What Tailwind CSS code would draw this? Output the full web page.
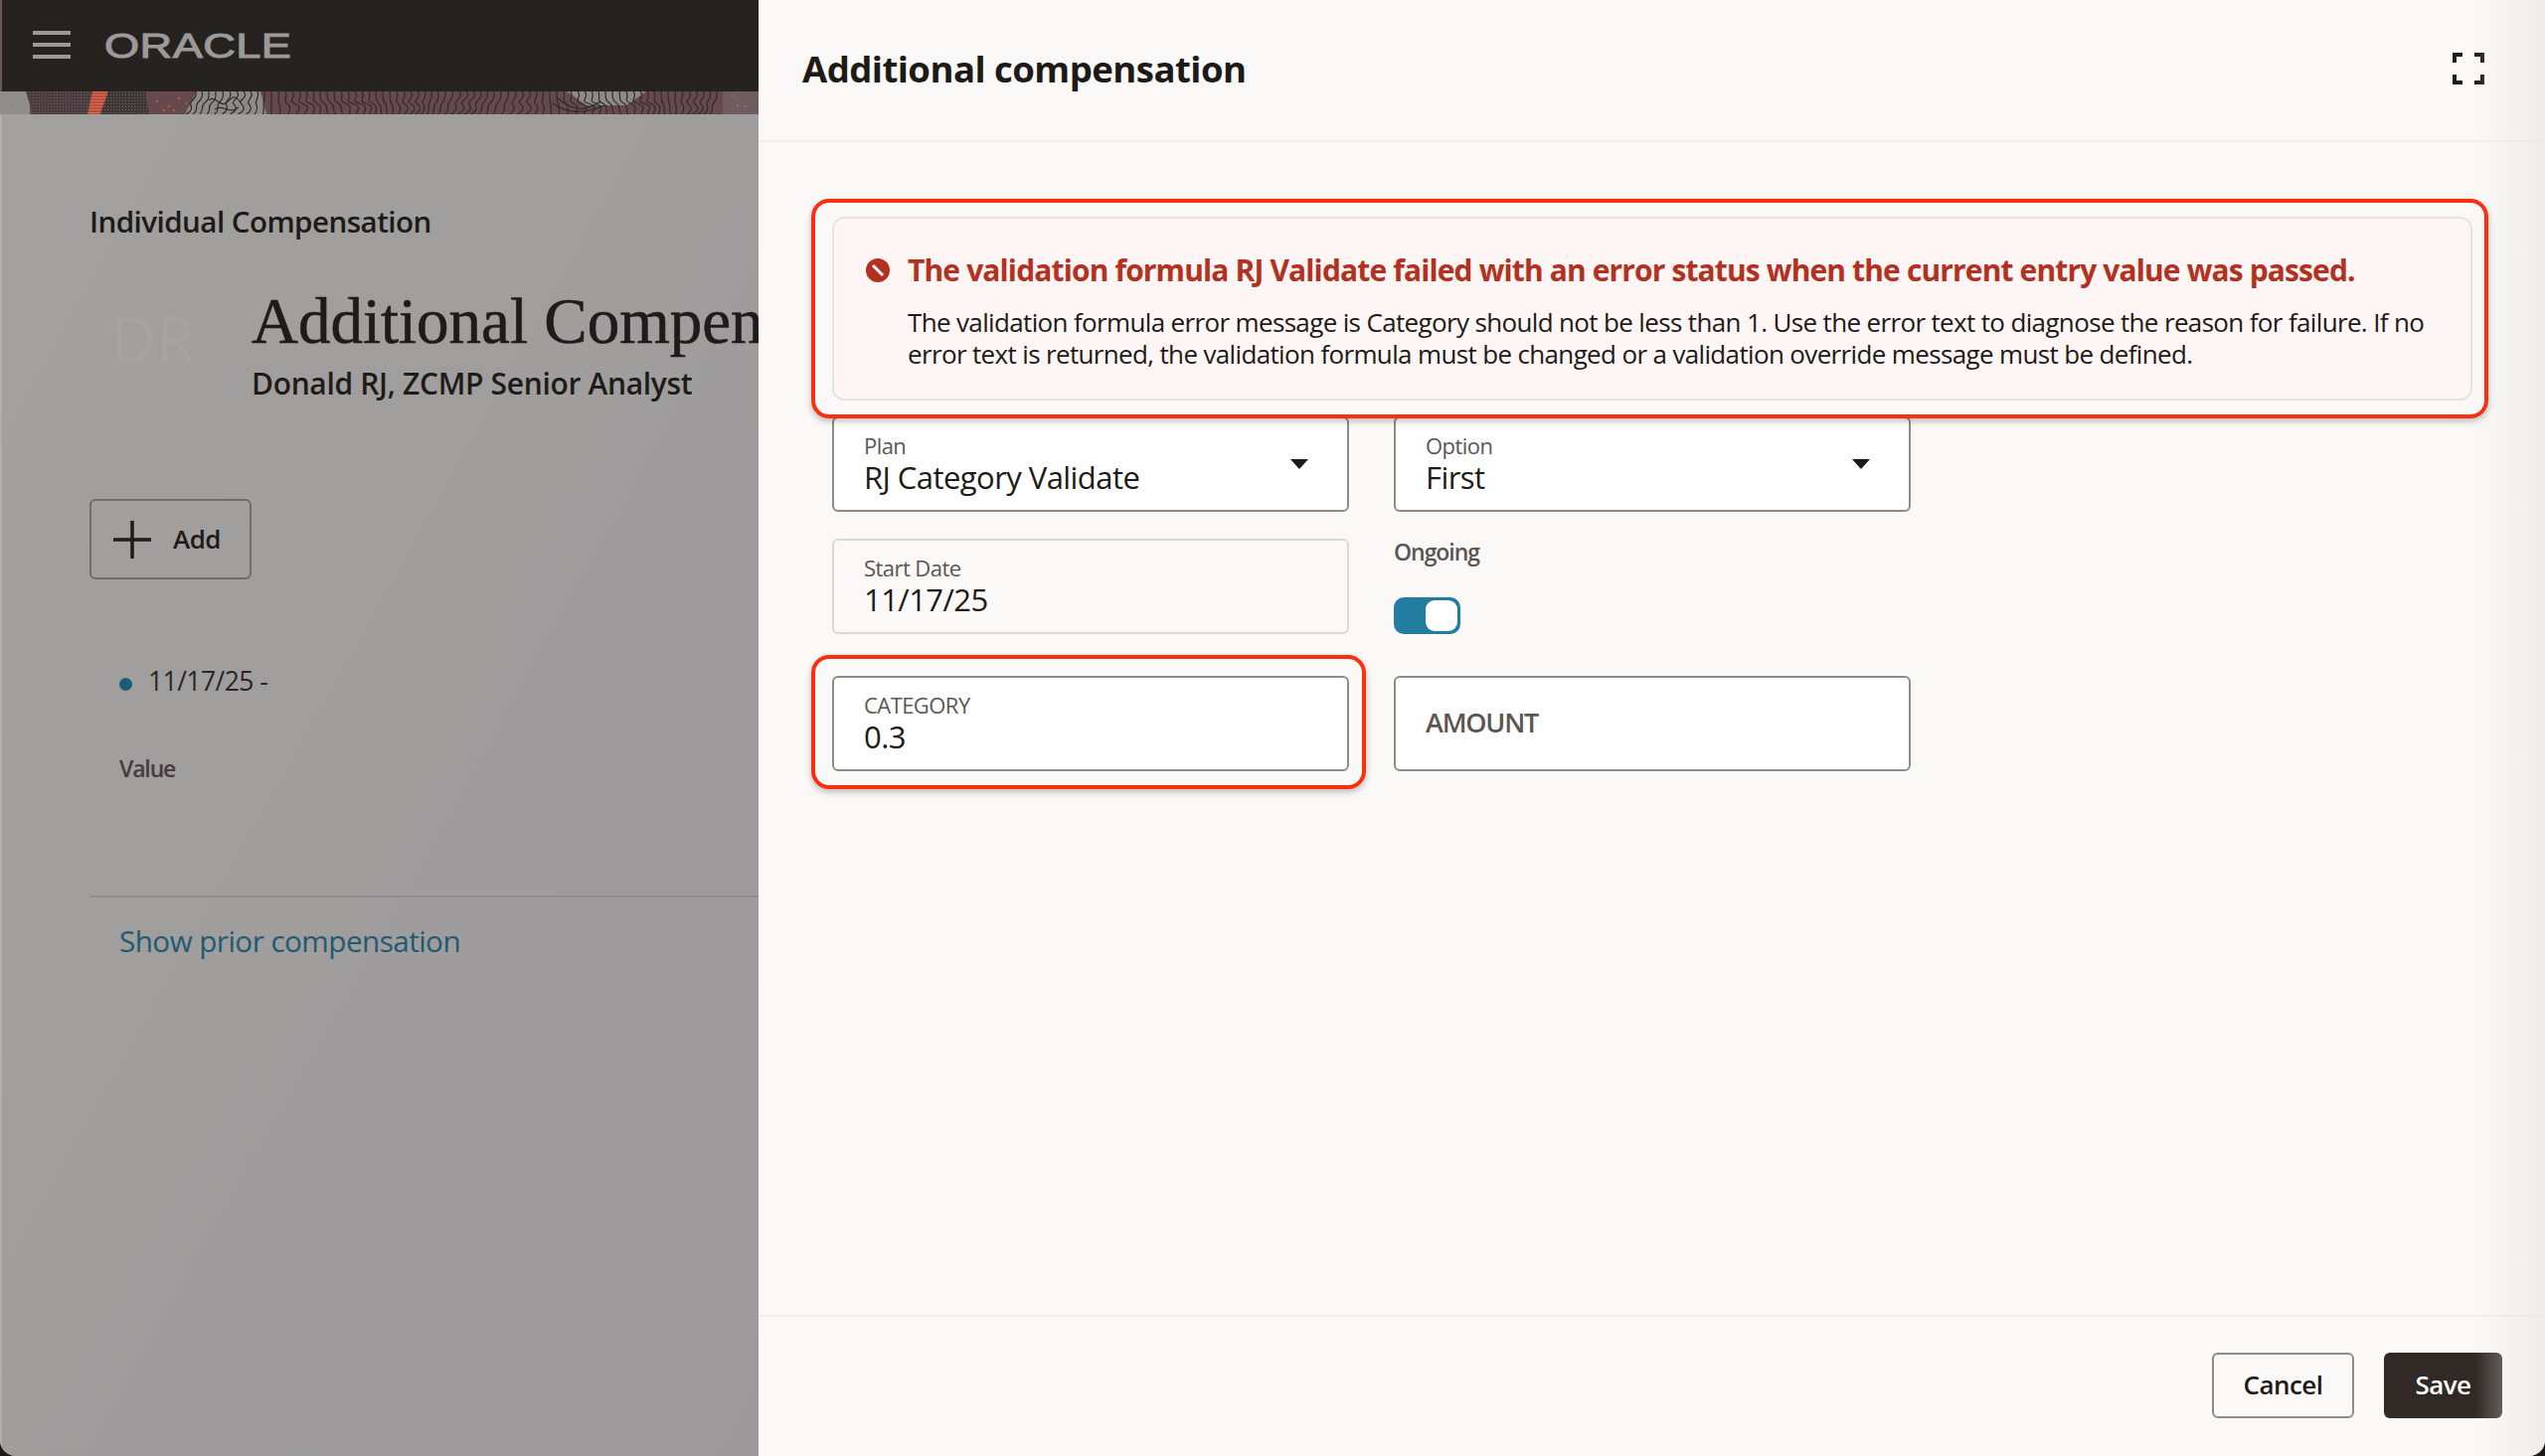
<!DOCTYPE html>
<html lang="en">
<head>
    <meta charset="UTF-8">
    <meta name="viewport" content="width=device-width, initial-scale=1.0">
    <title>Additional compensation</title>
    <script src="https://cdn.jsdelivr.net/npm/@tailwindcss/browser@4"></script>
</head>
<body class="bg-[#1c1a19] font-['Open_Sans',sans-serif] tracking-[-0.035em] overflow-hidden">
    <div class="relative flex w-[2560px] h-[1465px] overflow-hidden rounded-b-[16px]">

        <!-- left page, dimmed behind the drawer -->
        <aside class="w-[763px] shrink-0 flex flex-col bg-[#9e9d9c] overflow-hidden">
            <div class="h-[92px] shrink-0 bg-[#262220] flex items-center pl-[31px] gap-[34px] pb-[2px] border-l-[2px] border-[#6b5558]">
                <div class="w-[38px] flex flex-col gap-[8px]">
                    <div class="h-[4px] bg-[#9c9a99]"></div>
                    <div class="h-[4px] bg-[#9c9a99]"></div>
                    <div class="h-[4px] bg-[#9c9a99]"></div>
                </div>
                <span class="font-['Liberation_Sans',sans-serif] text-[35px] leading-none tracking-[0.01em] text-[#9c9a99] [-webkit-text-stroke:1px_#9c9a99] scale-x-[1.29] origin-left">ORACLE</span>
            </div>

            <svg class="h-[23px] w-full shrink-0" viewBox="0 0 763 23">
                <defs>
                    <pattern id="dots" width="3" height="3" patternUnits="userSpaceOnUse"><rect width="1" height="1" fill="#6d6365"/></pattern>
                    <pattern id="stripes" width="3" height="3" patternUnits="userSpaceOnUse"><rect width="3" height="3" fill="#b5503e"/><rect width="3" height="1" fill="#d96a52"/></pattern>
                </defs>
                <rect width="763" height="23" fill="#65494d"/>
                <rect width="30" height="23" fill="#8f8d8c"/>
                <polygon points="26,0 93,0 88,23 33,23" fill="#4a3c3f"/>
                <polygon points="26,0 93,0 88,23 33,23" fill="url(#dots)"/>
                <polygon points="93,0 109,0 101,23 88,23" fill="url(#stripes)"/>
                <polygon points="109,0 146,0 150,23 101,23" fill="#3f3638"/>
                <polygon points="109,0 146,0 150,23 101,23" fill="url(#dots)"/>
                <g fill="#d9604a">
                    <circle cx="158" cy="10" r="1"/><circle cx="170" cy="15" r="1"/><circle cx="180" cy="7" r="1"/><circle cx="165" cy="19" r="1"/><circle cx="12" cy="13" r="1"/><circle cx="175" cy="19" r="1"/><circle cx="187" cy="12" r="1"/>
                </g>
                <polygon points="198,0 262,0 268,23 186,23" fill="#8d8a89"/>
                <polygon points="570,0 650,0 630,14 590,14" fill="#8d8a89"/>
                <g id="wood" fill="none" stroke="#2f2a2b" stroke-width="1.2"></g>
                <rect x="727" y="0" width="36" height="23" fill="#6f5c5e"/>
                <rect x="727" y="0" width="36" height="23" fill="url(#dots)"/>
                <g fill="#d9604a"><circle cx="742" cy="14" r="1"/><circle cx="750" cy="15" r="1"/><circle cx="738" cy="4" r="1"/></g>
            </svg>

            <div class="flex-1 flex flex-col pl-[88px] border-l-[2px] border-[#b0afae] bg-gradient-to-br from-[#a2a19f] to-[#9c9a9b]">
                <div class="mt-[89px] text-[29.6px] leading-[38px] font-semibold text-[#1d1a18]">Individual Compensation</div>

                <div class="mt-[43px] flex">
                    <div class="w-[163px] shrink-0 pl-[22px] pt-[20px] text-[62px] leading-[70px] text-[#a5a4a3] tracking-normal">DR</div>
                    <div class="whitespace-nowrap">
                        <div class="font-['Liberation_Serif',serif] text-[65px] leading-[76px] tracking-normal text-[#1e1b19] [-webkit-text-stroke:0.6px_#1e1b19]">Additional Compensation</div>
                        <div class="mt-[7px] text-[30px] leading-[36px] font-semibold tracking-[-0.011em] text-[#1e1b19]">Donald RJ, ZCMP Senior Analyst</div>
                    </div>
                </div>

                <button class="mt-[98px] w-[163px] h-[81px] flex items-center pl-[22px] gap-[22px] border-2 border-[#6f6d6c] rounded-[6px] text-[26px] font-semibold text-[#1e1b19]">
                    <svg class="w-[38px] h-[38px]" viewBox="0 0 38 38"><path d="M19 0v38M0 19h38" stroke="#1e1b19" stroke-width="3.5" fill="none"/></svg>
                    Add
                </button>

                <div class="mt-[84px] ml-[30px] flex items-center gap-[16px] text-[26.5px] leading-[36px] text-[#2a2625]">
                    <span class="w-[13px] h-[13px] mt-[6px] rounded-full bg-[#1d5c78]"></span>
                    <span>11/17/25 -</span>
                </div>
                <div class="mt-[52px] ml-[30px] text-[23px] leading-[36px] font-semibold tracking-[-0.05em] text-[#463b3d]">Value</div>

                <div class="mt-[110px] h-[2px] bg-[#8f8e8d]"></div>
                <a class="mt-[24px] ml-[30px] text-[29.7px] leading-[40px] text-[#1f5a73]">Show prior compensation</a>
            </div>
        </aside>

        <!-- drawer -->
        <main class="flex-1 flex flex-col bg-[#fbf9f8]">
            <header class="h-[143px] shrink-0 flex items-center justify-between pl-[44px] pr-[61px] border-b-2 border-[#f1efed] pb-[3px]">
                <h1 class="text-[36.6px] font-bold text-[#1d1a18]">Additional compensation</h1>
                <svg class="w-[32px] h-[32px]" viewBox="0 0 32 32"><path d="M10 2H2v8M22 2h8v8M2 22v8h8M30 22v8h-8" fill="none" stroke="#211d1c" stroke-width="4"/></svg>
            </header>

            <section class="flex-1 pl-[74px] pr-[73px] pt-[75px]">
                <div class="relative z-10 h-[185px] rounded-[12px] border-2 border-[#e8e3e1] bg-[#fdf6f5] pl-[32px] pr-[30px] pt-[32px]">
                    <div class="flex items-center gap-[18px] text-[30px] leading-[40px] font-bold tracking-[-0.029em] text-[#b23121]">
                        <svg class="w-[24px] h-[24px] shrink-0" viewBox="0 0 24 24"><circle cx="12" cy="12" r="12" fill="#b23121"/><path d="M7 7l10 10" stroke="#fdf6f5" stroke-width="3"/></svg>
                        The validation formula RJ Validate failed with an error status when the current entry value was passed.
                    </div>
                    <p class="mt-[16px] ml-[42px] text-[26px] leading-[32px] tracking-[-0.025em] text-[#1d1a18]">The validation formula error message is Category should not be less than 1. Use the error text to diagnose the reason for failure. If no error text is returned, the validation formula must be changed or a validation override message must be defined.</p>
                </div>

                <div class="grid grid-cols-[520px_520px] gap-x-[45px] mt-[16px]">
                    <div class="relative h-[96px] rounded-[6px] border-2 border-[#8e8b8a] bg-white pl-[30px] pt-[13px]">
                        <div class="text-[22px] leading-[28px] text-[#5c5553]">Plan</div>
                        <div class="text-[31px] leading-[36px] text-[#1d1a18]">RJ Category Validate</div>
                        <div class="absolute right-[39px] top-[41px] w-0 h-0 border-x-[9px] border-x-transparent border-t-[10px] border-t-[#1d1a18]"></div>
                    </div>
                    <div class="relative h-[96px] rounded-[6px] border-2 border-[#8e8b8a] bg-white pl-[30px] pt-[13px]">
                        <div class="text-[22px] leading-[28px] text-[#5c5553]">Option</div>
                        <div class="text-[31px] leading-[36px] text-[#1d1a18]">First</div>
                        <div class="absolute right-[39px] top-[41px] w-0 h-0 border-x-[9px] border-x-transparent border-t-[10px] border-t-[#1d1a18]"></div>
                    </div>

                    <div class="mt-[27px] h-[96px] rounded-[6px] border-2 border-[#dcd8d5] pl-[30px] pt-[13px]">
                        <div class="text-[22px] leading-[28px] text-[#5c5553]">Start Date</div>
                        <div class="text-[31px] leading-[36px] text-[#1d1a18]">11/17/25</div>
                    </div>
                    <div class="mt-[25px] h-[98px] flex flex-col justify-between">
                        <div class="text-[23px] leading-[30px] font-semibold tracking-[-0.045em] text-[#5c5553]">Ongoing</div>
                        <div class="w-[67px] h-[37px] rounded-[10px] bg-[#237da0] flex justify-end items-center pr-[3px]">
                            <div class="w-[32px] h-[31px] rounded-[9px] bg-white"></div>
                        </div>
                    </div>

                    <div class="mt-[42px] h-[96px] rounded-[6px] border-2 border-[#8e8b8a] bg-white pl-[30px] pt-[13px]">
                        <div class="text-[22px] leading-[28px] text-[#5c5553]">CATEGORY</div>
                        <div class="text-[31px] leading-[36px] text-[#1d1a18]">0.3</div>
                    </div>
                    <div class="mt-[42px] h-[96px] flex items-center rounded-[6px] border-2 border-[#8e8b8a] bg-white pl-[30px] pb-[2px]">
                        <span class="text-[27px] font-semibold tracking-[-0.045em] text-[#5c5553]">AMOUNT</span>
                    </div>
                </div>
            </section>

            <footer class="h-[142px] shrink-0 flex items-center justify-end gap-[30px] pr-[43px] pb-[3px] border-t-2 border-[#f1efed]">
                <button class="w-[143px] h-[66px] rounded-[6px] border-2 border-[#8e8b8a] text-[26px] font-semibold text-[#1d1a18]">Cancel</button>
                <button class="w-[119px] h-[66px] rounded-[6px] bg-[#312926] text-[26px] font-semibold text-white">Save</button>
            </footer>
        </main>

        <!-- soft window shadow down the right edge -->
        <div class="absolute top-0 right-0 bottom-0 w-[70px] bg-gradient-to-r from-transparent to-[#e9e7e6]/70 pointer-events-none"></div>

        <!-- red callouts drawn on top of the screenshot -->
        <div class="absolute z-20 left-[816px] top-[200px] w-[1687px] h-[221px] rounded-[18px] border-[4px] border-[#f9300f] shadow-[0_3px_6px_rgba(0,0,0,0.25)] pointer-events-none"></div>
        <div class="absolute z-20 left-[816px] top-[659px] w-[558px] h-[135px] rounded-[18px] border-[4px] border-[#f9300f] shadow-[0_3px_6px_rgba(0,0,0,0.25)] pointer-events-none"></div>
    </div>

    <script>
        const wood = document.getElementById("wood");
        let d = "";
        for (let x = 196; x < 727; x += 7) {
            const lean = Math.sin(x * 0.023) * 9;
            const wave = 3 + Math.sin(x * 0.11) * 3;
            d += `M${x} 0c${wave} 6 ${-wave} 9 ${lean * 0.5} 12s${wave} 6 ${lean * 0.5} 11`;
        }
        wood.innerHTML = `<path d="${d}"/><path d="M210 9c6-6 12 8 18 2s8-8 14 0M216 18c8-6 14 6 24-2M560 6c14 12 26 16 44 4M556 12c14 10 30 12 52 2"/>`;
    </script>
</body>
</html>
